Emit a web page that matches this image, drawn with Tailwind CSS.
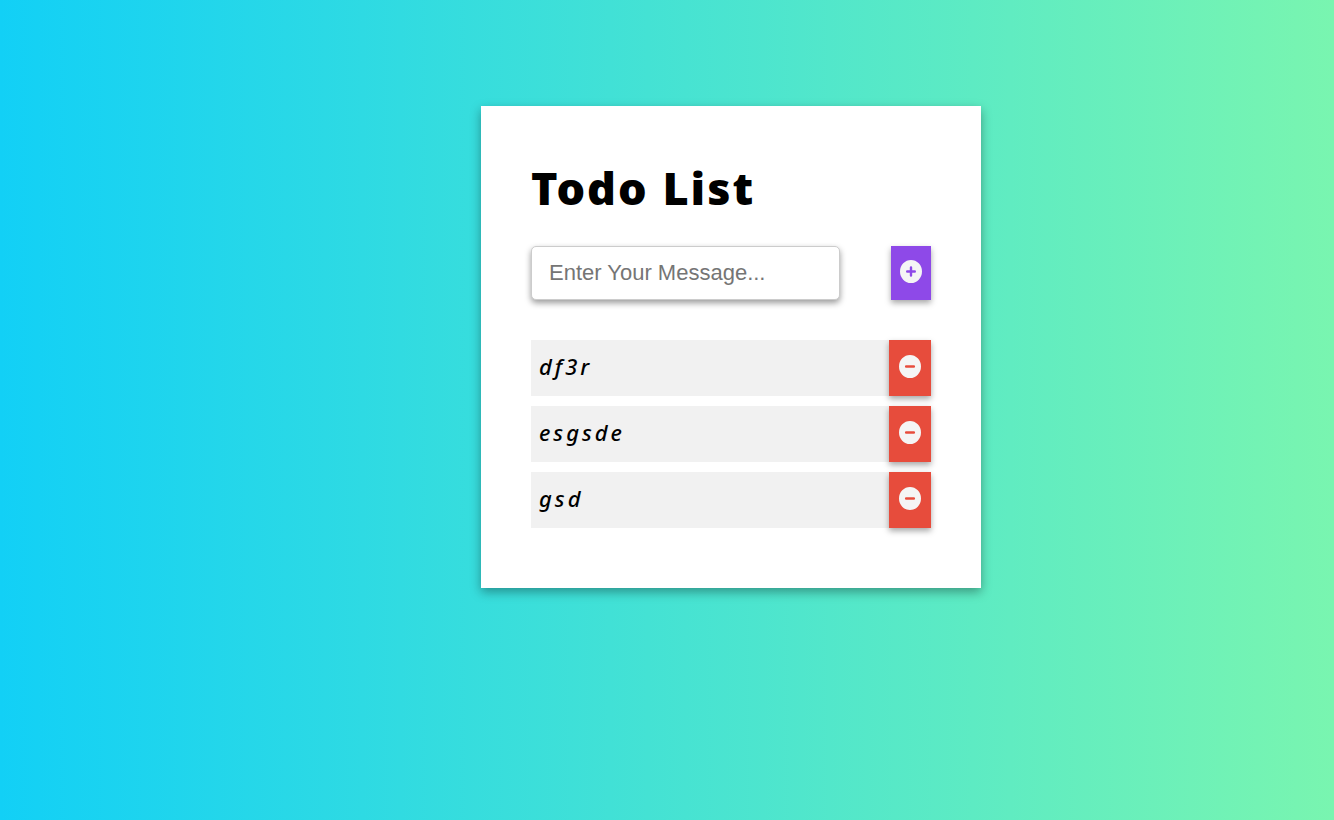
<!DOCTYPE html>
<html lang="en">
<head>
<meta charset="utf-8">
<meta name="viewport" content="width=device-width, initial-scale=1">
<title>Todo List</title>
<script src="https://cdn.jsdelivr.net/npm/@tailwindcss/browser@4"></script>
</head>
<body class="min-h-screen bg-[linear-gradient(to_right,#12d0f6,#79f5b0)] font-['Noto_Sans',sans-serif] text-black">
<svg class="hidden" aria-hidden="true">
  <symbol id="plus" viewBox="0 0 22 23"><path fill="#f5f5f5" fill-rule="evenodd" d="M11 0a11 11.5 0 1 1 0 23a11 11.5 0 1 1 0-23zM9.8 7.5v2.8H7.2a1.2 1.2 0 0 0 0 2.4H9.8v2.8a1.2 1.2 0 0 0 2.4 0v-2.8h2.6a1.2 1.2 0 0 0 0-2.4H12.2v-2.8a1.2 1.2 0 0 0-2.4 0z"/></symbol>
  <symbol id="minus" viewBox="0 0 22 23"><path fill="#f5f5f5" fill-rule="evenodd" d="M11 0a11 11.5 0 1 1 0 23a11 11.5 0 1 1 0-23zM7.2 10.2a1.3 1.3 0 0 0 0 2.6h7.6a1.3 1.3 0 0 0 0-2.6z"/></symbol>
</svg>
<main class="flex justify-center pt-[106px] md:pl-32">
  <section class="w-full max-w-[500px] bg-white px-[50px] pt-[50px] pb-[60px] shadow-[0_4px_10px_rgba(0,0,0,0.35)]">
    <h1 class="mb-[26px] text-[45px] leading-[64px] font-black tracking-[2px]">Todo List</h1>
    <form class="flex justify-between">
      <input type="text" aria-label="Message" placeholder="Enter Your Message..." class="h-[54px] w-[309px] min-w-0 rounded-[5px] border border-[#ccc] bg-white px-[17px] font-['Liberation_Sans',Arial,sans-serif] text-[22px] shadow-[0_3px_6px_rgba(0,0,0,0.4)] placeholder:text-[#757575]">
      <button type="button" aria-label="Add" class="flex h-[54px] w-10 shrink-0 items-center justify-center bg-[#8e49e8] pb-[3px] shadow-[0_3px_6px_rgba(0,0,0,0.35)]"><svg class="h-[23px] w-[22px]"><use href="#plus"/></svg></button>
    </form>
    <ul class="mt-10 flex flex-col gap-[10px] text-[22px] font-medium italic tracking-[3px]">
      <li class="flex h-14 items-center justify-between bg-[#f1f1f1] pl-2"><span class="pb-1">df3r</span><button type="button" aria-label="Remove df3r" class="flex h-full w-[42px] items-center justify-center bg-[#e74c3c] pb-[3px] shadow-[0_3px_6px_rgba(0,0,0,0.35)]"><svg class="h-[23px] w-[22px]"><use href="#minus"/></svg></button></li>
      <li class="flex h-14 items-center justify-between bg-[#f1f1f1] pl-2"><span class="pb-1">esgsde</span><button type="button" aria-label="Remove esgsde" class="flex h-full w-[42px] items-center justify-center bg-[#e74c3c] pb-[3px] shadow-[0_3px_6px_rgba(0,0,0,0.35)]"><svg class="h-[23px] w-[22px]"><use href="#minus"/></svg></button></li>
      <li class="flex h-14 items-center justify-between bg-[#f1f1f1] pl-2"><span class="pb-1">gsd</span><button type="button" aria-label="Remove gsd" class="flex h-full w-[42px] items-center justify-center bg-[#e74c3c] pb-[3px] shadow-[0_3px_6px_rgba(0,0,0,0.35)]"><svg class="h-[23px] w-[22px]"><use href="#minus"/></svg></button></li>
    </ul>
  </section>
</main>
</body>
</html>
